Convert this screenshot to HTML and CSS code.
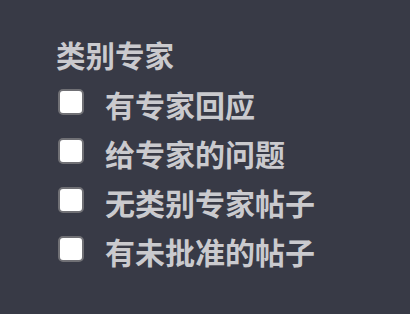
FILE: index.html
```html
<!DOCTYPE html>
<html lang="zh">
<head>
<meta charset="utf-8">
<link rel="stylesheet" href="styles.css">
</head>
<body>
<div class="panel">
  <div class="heading">类别专家</div>
  <ul class="options">
    <li><label class="option"><input type="checkbox" class="box"><span class="text">有专家回应</span></label></li>
    <li><label class="option"><input type="checkbox" class="box"><span class="text">给专家的问题</span></label></li>
    <li><label class="option"><input type="checkbox" class="box"><span class="text">无类别专家帖子</span></label></li>
    <li><label class="option"><input type="checkbox" class="box"><span class="text">有未批准的帖子</span></label></li>
  </ul>
</div>
</body>
</html>
```

FILE: styles.css
```css
html, body {
  margin: 0;
  padding: 0;
  background: #383a46;
  width: 410px;
  height: 314px;
  overflow: hidden;
}
body {
  font-family: "Noto Sans CJK SC", "Noto Sans", sans-serif;
  color: #cacace;
}
.panel {
  padding: 34px 0 0 56px;
}
.heading {
  font-size: 29.5px;
  font-weight: 700;
  line-height: 40px;
}
.options {
  list-style: none;
  margin: 3px 0 0 0;
  padding: 0 0 0 2px;
}
.option {
  display: flex;
  align-items: center;
  height: 49px;
}
.box {
  appearance: none;
  -webkit-appearance: none;
  margin: 0;
  width: 26px;
  height: 26px;
  box-sizing: border-box;
  background: #ffffff;
  border: 2px solid #707075;
  border-radius: 5px;
  flex: none;
}
.text {
  margin-left: 21px;
  font-size: 30px;
  font-weight: 700;
  line-height: 40px;
  position: relative;
  top: 2px;
}
```
